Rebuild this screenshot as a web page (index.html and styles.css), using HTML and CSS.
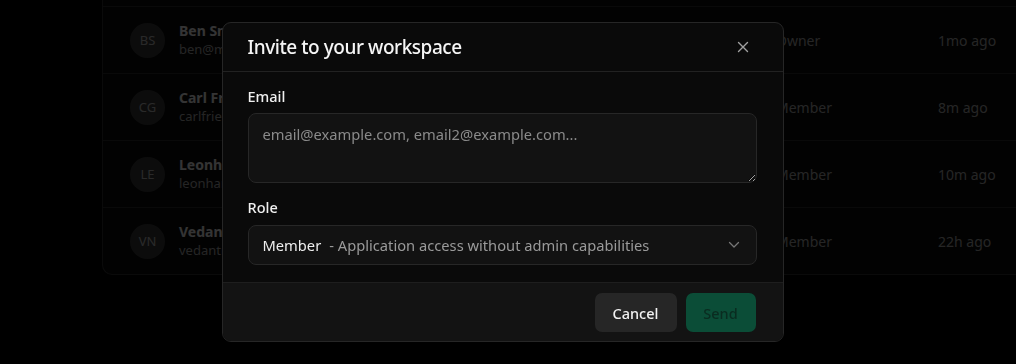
FILE: index.html
```html
<!DOCTYPE html>
<html lang="en">
<head>
  <meta charset="UTF-8">
  <title>Members</title>
  <link rel="stylesheet" href="styles.css">
</head>
<body>
  <div class="members">
    <div class="member-row head-row"></div>
    <div class="member-row">
      <div class="avatar">BS</div>
      <div class="who">
        <div class="name">Ben Smith</div>
        <div class="mail">ben@myspace.com</div>
      </div>
      <div class="role">Owner</div>
      <div class="seen">1mo ago</div>
    </div>
    <div class="member-row">
      <div class="avatar">CG</div>
      <div class="who">
        <div class="name">Carl Friedrich Gauss</div>
        <div class="mail">carlfriedrich@gauss.com</div>
      </div>
      <div class="role">Member</div>
      <div class="seen">8m ago</div>
    </div>
    <div class="member-row">
      <div class="avatar">LE</div>
      <div class="who">
        <div class="name">Leonhard Euler</div>
        <div class="mail">leonhard@euler.com</div>
      </div>
      <div class="role">Member</div>
      <div class="seen">10m ago</div>
    </div>
    <div class="member-row">
      <div class="avatar">VN</div>
      <div class="who">
        <div class="name">Vedant Nair</div>
        <div class="mail">vedantnair@mail.com</div>
      </div>
      <div class="role">Member</div>
      <div class="seen">22h ago</div>
    </div>
  </div>

  <div class="overlay">
    <div class="dialog">
      <div class="dialog-head">
        <h2>Invite to your workspace</h2>
        <button class="close-btn" aria-label="Close">
          <svg width="12" height="12" viewBox="0 0 12 12" fill="none" stroke="currentColor" stroke-width="1.4" stroke-linecap="round">
            <path d="M1.5 1.5l9 9M10.5 1.5l-9 9"/>
          </svg>
        </button>
      </div>
      <div class="dialog-body">
        <label class="field-label">Email</label>
        <textarea class="email-input" placeholder="email@example.com, email2@example.com..."></textarea>
        <label class="field-label role-label">Role</label>
        <div class="select">
          <span class="opt-name">Member</span>
          <span class="opt-desc">- Application access without admin capabilities</span>
          <svg class="chevron" width="12" height="8" viewBox="0 0 12 8" fill="none" stroke="currentColor" stroke-width="1.3" stroke-linecap="round" stroke-linejoin="round">
            <path d="M1.5 1.5l4.5 4.5 4.5-4.5"/>
          </svg>
        </div>
      </div>
      <div class="dialog-foot">
        <button class="btn btn-cancel">Cancel</button>
        <button class="btn btn-send">Send</button>
      </div>
    </div>
  </div>
</body>
</html>
```

FILE: styles.css
```css
body {
    margin: 0;
    padding: 0;
    background-color: #000;
    font-family: 'Noto Sans', sans-serif;
    overflow: hidden;
    height: 364px;
}

.members {
    margin: -27px 0 0 102px;
    border: 1px solid #303030;
    border-right: none;
    border-radius: 10px 0 0 10px;
    background-color: #0c0c0c;
}

.member-row {
    display: flex;
    align-items: center;
    height: 66px;
    padding: 0 27px;
    border-bottom: 1px solid #2c2c2c;
    white-space: nowrap;
}

.member-row:last-child {
    border-bottom: none;
}

.head-row {
    height: 32px;
}

.avatar {
    width: 35px;
    height: 35px;
    border-radius: 50%;
    background-color: #3a3a3a;
    color: #bcbcbc;
    font-size: 13px;
    display: flex;
    align-items: center;
    justify-content: center;
    flex-shrink: 0;
}

.who {
    margin-left: 14px;
    width: 597px;
    flex-shrink: 0;
}

.name {
    color: #eee;
    font-size: 14px;
    font-weight: 700;
    line-height: 18px;
}

.mail {
    color: #a8a8a8;
    font-size: 13px;
    line-height: 18px;
}

.role {
    width: 162px;
    flex-shrink: 0;
    color: #aaa;
    font-size: 14px;
}

.seen {
    color: #aaa;
    font-size: 14px;
}

.overlay {
    position: fixed;
    inset: 0;
    background-color: rgba(0, 0, 0, 0.78);
    display: flex;
    align-items: center;
    justify-content: center;
    padding-right: 11px;
}

.dialog {
    width: 560px;
    background-color: #0a0a0a;
    border: 1px solid #262626;
    border-radius: 9px;
    overflow: hidden;
}

.dialog-head {
    display: flex;
    align-items: center;
    justify-content: space-between;
    height: 48px;
    padding: 0 34px 0 25px;
    border-bottom: 1px solid #222;
}

.dialog-head h2 {
    margin: 0;
    color: #f5f5f5;
    font-size: 19px;
    font-weight: 500;
    letter-spacing: -0.45px;
}

.close-btn {
    background: none;
    border: none;
    padding: 0;
    color: #a0a0a0;
    display: flex;
}

.dialog-body {
    padding: 14px 26px 17px 25px;
    display: flex;
    flex-direction: column;
}

.field-label {
    color: #f0f0f0;
    font-size: 14.5px;
    font-weight: 500;
    line-height: 20px;
    margin-bottom: 7px;
}

.role-label {
    margin-top: 14px;
    margin-bottom: 8px;
}

.email-input {
    box-sizing: border-box;
    height: 70px;
    padding: 10px 14px;
    background-color: #121212;
    border: 1px solid #272727;
    border-radius: 8px;
    color: #ddd;
    font-family: 'Noto Sans', sans-serif;
    font-size: 14.7px;
    resize: vertical;
    outline: none;
}

.email-input::placeholder {
    color: #8a8a8a;
}

.select {
    box-sizing: border-box;
    height: 40px;
    display: flex;
    align-items: center;
    padding: 0 14px;
    background-color: #121212;
    border: 1px solid #272727;
    border-radius: 8px;
    font-size: 14.7px;
}

.opt-name {
    color: #eee;
    margin-right: 8px;
}

.opt-desc {
    color: #9a9a9a;
    flex: 1;
}

.chevron {
    color: #777;
    margin-right: 2px;
}

.dialog-foot {
    display: flex;
    justify-content: flex-end;
    gap: 9px;
    padding: 10px 27px 9px;
    background-color: #131313;
    border-top: 1px solid #1e1e1e;
}

.btn {
    height: 39px;
    border: none;
    border-radius: 7px;
    font-family: 'Noto Sans', sans-serif;
    font-size: 14.5px;
    font-weight: 500;
    padding: 0 16px;
}

.btn-cancel {
    width: 82px;
    background-color: #262626;
    color: #f2f2f2;
}

.btn-send {
    width: 70px;
    background-color: #0b4d37;
    color: #0a2c20;
}
```
